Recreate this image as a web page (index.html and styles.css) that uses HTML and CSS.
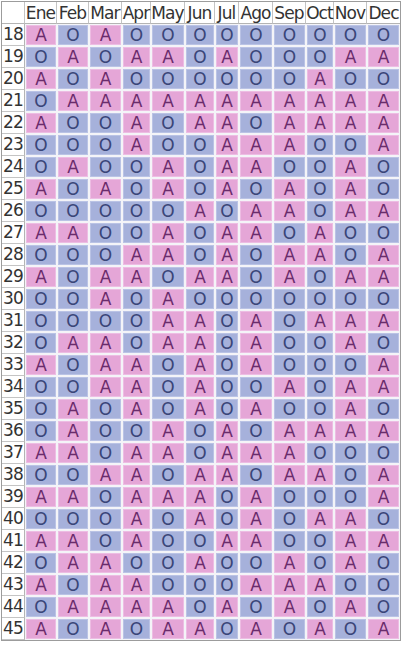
FILE: index.html
```html
<!DOCTYPE html>
<html lang="es">
<head>
<meta charset="utf-8">
<title>Tabla</title>
<link rel="stylesheet" href="styles.css">
</head>
<body>
<div class="grid">
<span class="h corner"></span><span class="h">Ene</span><span class="h">Feb</span><span class="h">Mar</span><span class="h">Apr</span><span class="h">May</span><span class="h">Jun</span><span class="h">Jul</span><span class="h">Ago</span><span class="h">Sep</span><span class="h">Oct</span><span class="h">Nov</span><span class="h">Dec</span>
<span class="n">18</span><span class="c a">A</span><span class="c o">O</span><span class="c a">A</span><span class="c o">O</span><span class="c o">O</span><span class="c o">O</span><span class="c o">O</span><span class="c o">O</span><span class="c o">O</span><span class="c o">O</span><span class="c o">O</span><span class="c o">O</span>
<span class="n">19</span><span class="c o">O</span><span class="c a">A</span><span class="c o">O</span><span class="c a">A</span><span class="c a">A</span><span class="c o">O</span><span class="c a">A</span><span class="c o">O</span><span class="c o">O</span><span class="c o">O</span><span class="c a">A</span><span class="c a">A</span>
<span class="n">20</span><span class="c a">A</span><span class="c o">O</span><span class="c a">A</span><span class="c o">O</span><span class="c o">O</span><span class="c o">O</span><span class="c o">O</span><span class="c o">O</span><span class="c o">O</span><span class="c a">A</span><span class="c o">O</span><span class="c o">O</span>
<span class="n">21</span><span class="c o">O</span><span class="c a">A</span><span class="c a">A</span><span class="c a">A</span><span class="c a">A</span><span class="c a">A</span><span class="c a">A</span><span class="c a">A</span><span class="c a">A</span><span class="c a">A</span><span class="c a">A</span><span class="c a">A</span>
<span class="n">22</span><span class="c a">A</span><span class="c o">O</span><span class="c o">O</span><span class="c a">A</span><span class="c o">O</span><span class="c a">A</span><span class="c a">A</span><span class="c o">O</span><span class="c a">A</span><span class="c a">A</span><span class="c a">A</span><span class="c a">A</span>
<span class="n">23</span><span class="c o">O</span><span class="c o">O</span><span class="c o">O</span><span class="c a">A</span><span class="c o">O</span><span class="c o">O</span><span class="c a">A</span><span class="c a">A</span><span class="c a">A</span><span class="c o">O</span><span class="c o">O</span><span class="c a">A</span>
<span class="n">24</span><span class="c o">O</span><span class="c a">A</span><span class="c o">O</span><span class="c o">O</span><span class="c a">A</span><span class="c o">O</span><span class="c a">A</span><span class="c a">A</span><span class="c o">O</span><span class="c o">O</span><span class="c a">A</span><span class="c o">O</span>
<span class="n">25</span><span class="c a">A</span><span class="c o">O</span><span class="c a">A</span><span class="c o">O</span><span class="c a">A</span><span class="c o">O</span><span class="c a">A</span><span class="c o">O</span><span class="c a">A</span><span class="c o">O</span><span class="c a">A</span><span class="c o">O</span>
<span class="n">26</span><span class="c o">O</span><span class="c o">O</span><span class="c o">O</span><span class="c o">O</span><span class="c o">O</span><span class="c a">A</span><span class="c o">O</span><span class="c a">A</span><span class="c a">A</span><span class="c o">O</span><span class="c a">A</span><span class="c a">A</span>
<span class="n">27</span><span class="c a">A</span><span class="c a">A</span><span class="c o">O</span><span class="c o">O</span><span class="c a">A</span><span class="c o">O</span><span class="c a">A</span><span class="c a">A</span><span class="c o">O</span><span class="c a">A</span><span class="c o">O</span><span class="c o">O</span>
<span class="n">28</span><span class="c o">O</span><span class="c o">O</span><span class="c o">O</span><span class="c a">A</span><span class="c a">A</span><span class="c o">O</span><span class="c a">A</span><span class="c o">O</span><span class="c a">A</span><span class="c a">A</span><span class="c o">O</span><span class="c a">A</span>
<span class="n">29</span><span class="c a">A</span><span class="c o">O</span><span class="c a">A</span><span class="c a">A</span><span class="c o">O</span><span class="c a">A</span><span class="c a">A</span><span class="c o">O</span><span class="c a">A</span><span class="c o">O</span><span class="c a">A</span><span class="c a">A</span>
<span class="n">30</span><span class="c o">O</span><span class="c o">O</span><span class="c a">A</span><span class="c o">O</span><span class="c a">A</span><span class="c o">O</span><span class="c o">O</span><span class="c o">O</span><span class="c o">O</span><span class="c o">O</span><span class="c o">O</span><span class="c o">O</span>
<span class="n">31</span><span class="c o">O</span><span class="c o">O</span><span class="c o">O</span><span class="c o">O</span><span class="c a">A</span><span class="c a">A</span><span class="c o">O</span><span class="c a">A</span><span class="c o">O</span><span class="c a">A</span><span class="c a">A</span><span class="c a">A</span>
<span class="n">32</span><span class="c o">O</span><span class="c a">A</span><span class="c a">A</span><span class="c o">O</span><span class="c a">A</span><span class="c a">A</span><span class="c o">O</span><span class="c a">A</span><span class="c o">O</span><span class="c o">O</span><span class="c a">A</span><span class="c o">O</span>
<span class="n">33</span><span class="c a">A</span><span class="c o">O</span><span class="c a">A</span><span class="c a">A</span><span class="c o">O</span><span class="c a">A</span><span class="c o">O</span><span class="c a">A</span><span class="c o">O</span><span class="c o">O</span><span class="c o">O</span><span class="c a">A</span>
<span class="n">34</span><span class="c o">O</span><span class="c o">O</span><span class="c a">A</span><span class="c a">A</span><span class="c o">O</span><span class="c a">A</span><span class="c o">O</span><span class="c o">O</span><span class="c a">A</span><span class="c o">O</span><span class="c a">A</span><span class="c a">A</span>
<span class="n">35</span><span class="c o">O</span><span class="c a">A</span><span class="c o">O</span><span class="c a">A</span><span class="c o">O</span><span class="c a">A</span><span class="c o">O</span><span class="c a">A</span><span class="c o">O</span><span class="c o">O</span><span class="c a">A</span><span class="c o">O</span>
<span class="n">36</span><span class="c o">O</span><span class="c a">A</span><span class="c o">O</span><span class="c o">O</span><span class="c a">A</span><span class="c o">O</span><span class="c a">A</span><span class="c o">O</span><span class="c a">A</span><span class="c a">A</span><span class="c a">A</span><span class="c a">A</span>
<span class="n">37</span><span class="c a">A</span><span class="c a">A</span><span class="c o">O</span><span class="c a">A</span><span class="c a">A</span><span class="c o">O</span><span class="c a">A</span><span class="c a">A</span><span class="c a">A</span><span class="c o">O</span><span class="c o">O</span><span class="c o">O</span>
<span class="n">38</span><span class="c o">O</span><span class="c o">O</span><span class="c a">A</span><span class="c a">A</span><span class="c o">O</span><span class="c a">A</span><span class="c a">A</span><span class="c o">O</span><span class="c a">A</span><span class="c a">A</span><span class="c o">O</span><span class="c a">A</span>
<span class="n">39</span><span class="c a">A</span><span class="c a">A</span><span class="c o">O</span><span class="c a">A</span><span class="c a">A</span><span class="c a">A</span><span class="c o">O</span><span class="c a">A</span><span class="c o">O</span><span class="c o">O</span><span class="c o">O</span><span class="c a">A</span>
<span class="n">40</span><span class="c o">O</span><span class="c o">O</span><span class="c o">O</span><span class="c a">A</span><span class="c o">O</span><span class="c a">A</span><span class="c o">O</span><span class="c a">A</span><span class="c o">O</span><span class="c a">A</span><span class="c a">A</span><span class="c o">O</span>
<span class="n">41</span><span class="c a">A</span><span class="c a">A</span><span class="c o">O</span><span class="c a">A</span><span class="c o">O</span><span class="c o">O</span><span class="c a">A</span><span class="c a">A</span><span class="c o">O</span><span class="c o">O</span><span class="c a">A</span><span class="c a">A</span>
<span class="n">42</span><span class="c o">O</span><span class="c a">A</span><span class="c a">A</span><span class="c o">O</span><span class="c o">O</span><span class="c a">A</span><span class="c o">O</span><span class="c o">O</span><span class="c a">A</span><span class="c o">O</span><span class="c a">A</span><span class="c o">O</span>
<span class="n">43</span><span class="c a">A</span><span class="c o">O</span><span class="c a">A</span><span class="c a">A</span><span class="c o">O</span><span class="c o">O</span><span class="c o">O</span><span class="c a">A</span><span class="c a">A</span><span class="c a">A</span><span class="c o">O</span><span class="c o">O</span>
<span class="n">44</span><span class="c o">O</span><span class="c a">A</span><span class="c a">A</span><span class="c a">A</span><span class="c a">A</span><span class="c o">O</span><span class="c a">A</span><span class="c o">O</span><span class="c a">A</span><span class="c o">O</span><span class="c a">A</span><span class="c o">O</span>
<span class="n">45</span><span class="c a">A</span><span class="c o">O</span><span class="c a">A</span><span class="c o">O</span><span class="c a">A</span><span class="c a">A</span><span class="c o">O</span><span class="c a">A</span><span class="c o">O</span><span class="c a">A</span><span class="c o">O</span><span class="c a">A</span>
</div>
</body>
</html>
```
FILE: styles.css
```css
html, body {
  margin: 0;
  padding: 0;
  background: #ffffff;
}

body {
  padding: 1px 0 0 1px;
  font-family: "DejaVu Sans", Verdana, sans-serif;
}

.grid {
  display: grid;
  grid-template-columns: 23px 32px 32px 33px 29px 34px 30px 24px 34px 33px 28px 33px 33px;
  grid-auto-rows: 22px;
  width: max-content;
  border: 1px solid #9c9c9c;
  background: #ffffff;
  font-size: 17px;
  line-height: 1;
}

.h,
.n,
.c {
  box-sizing: border-box;
  display: flex;
  align-items: center;
  justify-content: center;
  white-space: nowrap;
  overflow: visible;
}

.h {
  color: #333333;
  font-size: 17px;
  letter-spacing: -0.9px;
  border-right: 1px solid #c4c4c4;
  border-bottom: 1px solid #b4b4b4;
  padding-top: 1px;
}

.h:nth-child(13) {
  border-right: 0;
}

.n {
  color: #333333;
  font-size: 17px;
  letter-spacing: -0.8px;
  border-right: 1px solid #b4b4b4;
  border-bottom: 1px solid #c4c4c4;
  justify-content: flex-start;
  padding-left: 1px;
}

.c {
  border: 1px solid #f4f4f8;
  font-size: 17px;
}

.a {
  background: #e5a6d7;
  color: #6a2c6c;
  box-shadow: inset 0 0 0 1px #edbde3;
}

.o {
  background: #a6b1db;
  color: #3a4578;
  box-shadow: inset 0 0 0 1px #bac3e5;
}
```
